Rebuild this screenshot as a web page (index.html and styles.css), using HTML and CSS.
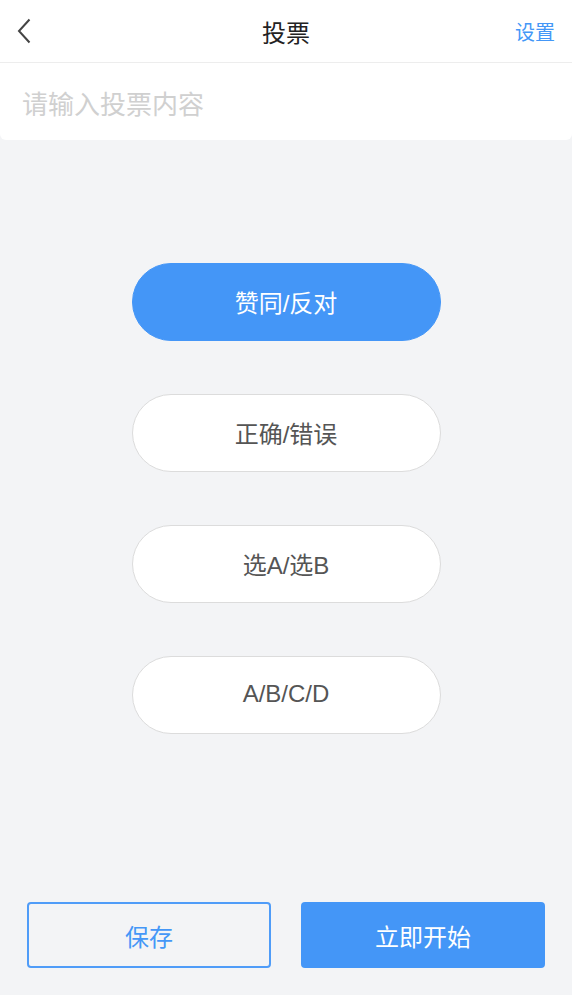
FILE: index.html
```html
<!DOCTYPE html>
<html lang="zh">
<head>
  <meta charset="UTF-8">
  <meta name="viewport" content="width=device-width, initial-scale=1.0">
  <title>投票</title>
  <link rel="stylesheet" href="styles.css">
</head>
<body>
  <div class="header">
    <span class="back">
      <svg width="16" height="26" viewBox="0 0 16 26"><path d="M13.5 1.5 L3 13 L13.5 24.5" fill="none" stroke="#444" stroke-width="2"/></svg>
    </span>
    <h1>投票</h1>
    <span class="setting">设置</span>
  </div>

  <div class="input-box">
    <input type="text" placeholder="请输入投票内容">
  </div>

  <div class="options">
    <button class="pill active">赞同/反对</button>
    <button class="pill">正确/错误</button>
    <button class="pill">选A/选B</button>
    <button class="pill">A/B/C/D</button>
  </div>

  <div class="footer">
    <button class="btn-save">保存</button>
    <button class="btn-start">立即开始</button>
  </div>
</body>
</html>
```
FILE: styles.css
```css
* {
  margin: 0;
  padding: 0;
  box-sizing: border-box;
  font-family: "Liberation Sans", "Noto Sans CJK SC", sans-serif;
}

body {
  background-color: #f3f4f6;
  width: 572px;
  height: 995px;
  display: flex;
  flex-direction: column;
}

.header {
  height: 63px;
  background: #fff;
  border-bottom: 1px solid #ededed;
  display: flex;
  align-items: center;
  justify-content: space-between;
  padding: 0 17px 0 16px;
  position: relative;
}

.back {
  display: flex;
  align-items: center;
}

.header h1 {
  position: absolute;
  left: 0;
  right: 0;
  text-align: center;
  font-size: 24px;
  font-weight: normal;
  color: #222;
  pointer-events: none;
}

.setting {
  font-size: 20px;
  color: #4497f7;
}

.input-box {
  background: #fff;
  height: 77px;
  border-radius: 0 0 6px 6px;
  display: flex;
  align-items: center;
  padding: 8px 22px 0;
}

.input-box input {
  width: 100%;
  border: none;
  outline: none;
  font-size: 26px;
  color: #333;
  background: transparent;
}

.input-box input::placeholder {
  color: #d0d0d0;
}

.options {
  display: flex;
  flex-direction: column;
  align-items: center;
  gap: 53px;
  padding-top: 123px;
  flex: 1;
}

.pill {
  width: 309px;
  height: 78px;
  border-radius: 39px;
  border: 1px solid #dcdcdc;
  background: #fff;
  color: #555;
  font-size: 24px;
  padding-bottom: 2px;
}

.pill.active {
  background: #4496f7;
  border-color: #4496f7;
  color: #fff;
}

.footer {
  display: flex;
  justify-content: space-between;
  padding: 0 27px 27px 27px;
}

.footer button {
  width: 244px;
  height: 66px;
  border-radius: 4px;
  font-size: 24px;
}

.btn-save {
  background: transparent;
  border: 2px solid #4f9cf8;
  color: #4497f7;
}

.btn-start {
  background: #4496f7;
  border: none;
  color: #fff;
}
```
